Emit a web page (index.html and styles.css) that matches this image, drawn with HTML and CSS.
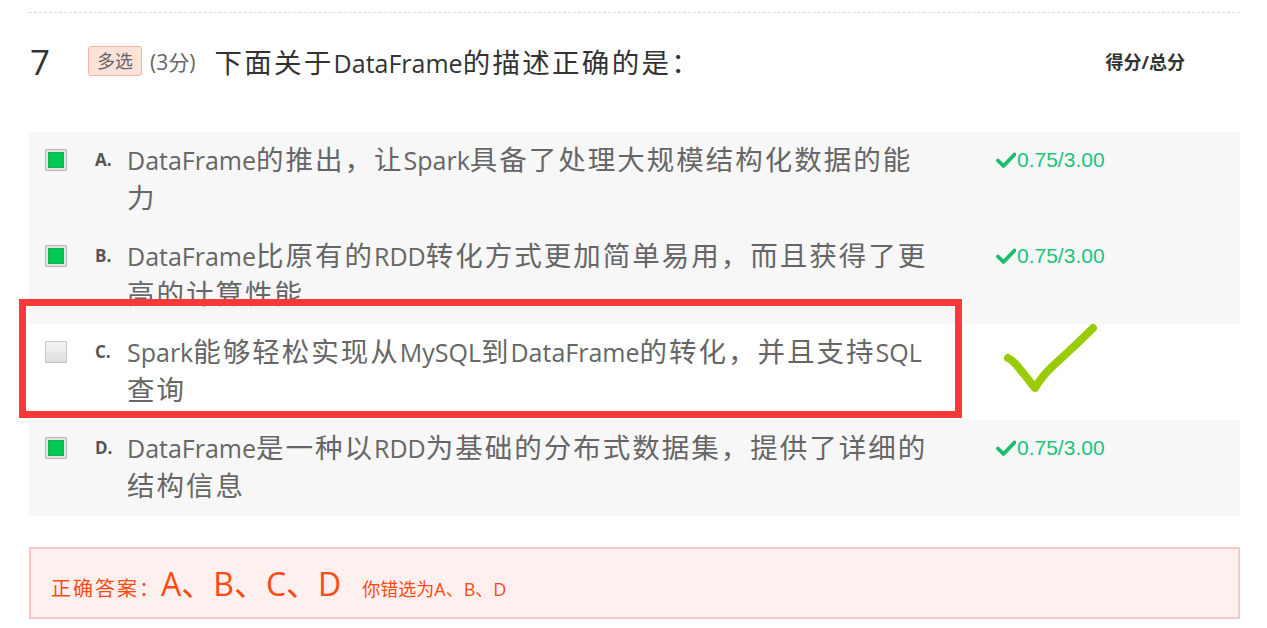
FILE: index.html
```html
<!DOCTYPE html>
<html lang="zh-CN">
<head>
<meta charset="utf-8">
<title>多选题</title>
<link rel="stylesheet" href="styles.css">
</head>
<body>
<div class="page">
  <div class="question">
    <div class="q-head">
      <span class="q-num">7</span>
      <span class="q-tag">多选</span>
      <span class="q-score">(3分)</span>
      <h2 class="q-title">下面关于<span class="en">DataFrame</span>的描述正确的是：</h2>
      <span class="q-label">得分/总分</span>
    </div>
    <ul class="options">
      <li class="option">
        <span class="checkbox checked"><span class="fill"></span></span>
        <span class="letter">A.</span>
        <span class="text"><span class="en">DataFrame</span>的推出，让<span class="en">Spark</span>具备了处理大规模结构化数据的能力</span>
        <span class="score"><svg class="tick" viewBox="0 0 20 16" width="20" height="16"><path d="M2 8.5 L7.5 14 L18.5 2.5"/></svg>0.75/3.00</span>
      </li>
      <li class="option">
        <span class="checkbox checked"><span class="fill"></span></span>
        <span class="letter">B.</span>
        <span class="text"><span class="en">DataFrame</span>比原有的<span class="en">RDD</span>转化方式更加简单易用，而且获得了更高的计算性能</span>
        <span class="score"><svg class="tick" viewBox="0 0 20 16" width="20" height="16"><path d="M2 8.5 L7.5 14 L18.5 2.5"/></svg>0.75/3.00</span>
      </li>
      <li class="option plain">
        <span class="checkbox"></span>
        <span class="letter">C.</span>
        <span class="text"><span class="en">Spark</span>能够轻松实现从<span class="en">MySQL</span>到<span class="en">DataFrame</span>的转化，并且支持<span class="en">SQL</span>查询</span>
        <span class="score"></span>
      </li>
      <li class="option">
        <span class="checkbox checked"><span class="fill"></span></span>
        <span class="letter">D.</span>
        <span class="text"><span class="en">DataFrame</span>是一种以<span class="en">RDD</span>为基础的分布式数据集，提供了详细的结构信息</span>
        <span class="score"><svg class="tick" viewBox="0 0 20 16" width="20" height="16"><path d="M2 8.5 L7.5 14 L18.5 2.5"/></svg>0.75/3.00</span>
      </li>
    </ul>
    <div class="answer">
      <span class="answer-label">正确答案：</span>
      <span class="answer-value">A、B、C、D</span>
      <span class="answer-wrong">你错选为A、B、D</span>
    </div>
  </div>
  <div class="mark-box"></div>
  <svg class="mark-check" viewBox="0 0 100 75" width="100" height="75">
    <path d="M8 38 C12 40, 15 43, 19 48 C25 55, 30 62, 35 68 C39 61, 45 53, 55 44 C66 34, 78 23, 93 8"/>
  </svg>
</div>
</body>
</html>
```

FILE: styles.css
```css
* { box-sizing: border-box; }

body {
  margin: 0;
  background: #fff;
  font-family: "Open Sans", "Noto Sans CJK SC", sans-serif;
  color: #333;
}

.page {
  position: relative;
  padding: 12px 27px 0 29px;
}

.question {
  border-top: 1px dashed #dcdcdc;
}

.q-head {
  display: flex;
  align-items: center;
  height: 36px;
  margin-top: 30px;
}

.q-num {
  width: 59px;
  padding-left: 1px;
  font-size: 35px;
  color: #333;
}

.q-tag {
  height: 30px;
  padding: 0 8px;
  line-height: 28px;
  font-size: 18px;
  color: #666;
  background: #fde2da;
  border: 1px solid #f7b5a1;
  border-radius: 3px;
}

.q-score {
  margin-left: 8px;
  font-size: 21px;
  color: #666;
}

.q-title {
  margin: 0 0 0 19px;
  font-size: 27.5px;
  font-weight: normal;
  letter-spacing: 2.3px;
  color: #333;
}

.en {
  font-size: 25px;
  letter-spacing: 0;
}

.q-label {
  margin-left: auto;
  margin-right: 55px;
  font-size: 18px;
  font-weight: bold;
  color: #333;
}

.options {
  list-style: none;
  margin: 53px 0 0;
  padding: 0;
}

.option {
  display: flex;
  align-items: flex-start;
  min-height: 96px;
  padding: 9px 0 11px 16px;
  background: #f7f7f7;
}

.option.plain { background: #fff; }

.checkbox {
  flex: none;
  width: 22px;
  height: 22px;
  margin-top: 8px;
  border: 1px solid #c4c4c4;
  background: linear-gradient(#f4f4f4, #dedede);
  border-radius: 1px;
}

.checkbox.checked {
  padding: 2px;
  border-color: #b5b5b5;
  background: #e4e4e4;
}

.checkbox .fill {
  display: block;
  width: 16px;
  height: 16px;
  background: #00c853;
  border: 1px solid #16b04c;
}

.letter {
  flex: none;
  width: 32px;
  margin-left: 28px;
  font-size: 17px;
  font-weight: bold;
  line-height: 38px;
  color: #555;
}

.text {
  flex: none;
  width: 808px;
  font-size: 27.5px;
  line-height: 38px;
  letter-spacing: 2px;
  color: #666;
}

.score {
  display: flex;
  align-items: center;
  height: 38px;
  margin-left: 61px;
  font-family: "Liberation Sans", Arial, sans-serif;
  font-size: 21px;
  color: #19c47d;
}

.tick {
  margin-right: 1px;
  fill: none;
  stroke: #17bf6a;
  stroke-width: 3.8;
  stroke-linecap: round;
  stroke-linejoin: round;
}

.answer {
  display: flex;
  align-items: baseline;
  height: 72px;
  margin-top: 31px;
  padding: 15px 20px 0;
  background: #fff0f0;
  border: 2px solid #f8c8c8;
  color: #ff4a12;
}

.answer-label {
  font-size: 20px;
  letter-spacing: 2px;
  line-height: 40px;
}

.answer-value {
  font-size: 32px;
  line-height: 40px;
}

.answer-wrong {
  margin-left: 21px;
  font-size: 18px;
  line-height: 40px;
}

.mark-box {
  position: absolute;
  left: 19px;
  top: 299px;
  width: 943px;
  height: 119px;
  border: 7px solid #fc3838;
}

.mark-check {
  position: absolute;
  left: 1000px;
  top: 320px;
  fill: none;
  stroke: #99cc00;
  stroke-width: 8;
  stroke-linecap: round;
  stroke-linejoin: round;
}
```
